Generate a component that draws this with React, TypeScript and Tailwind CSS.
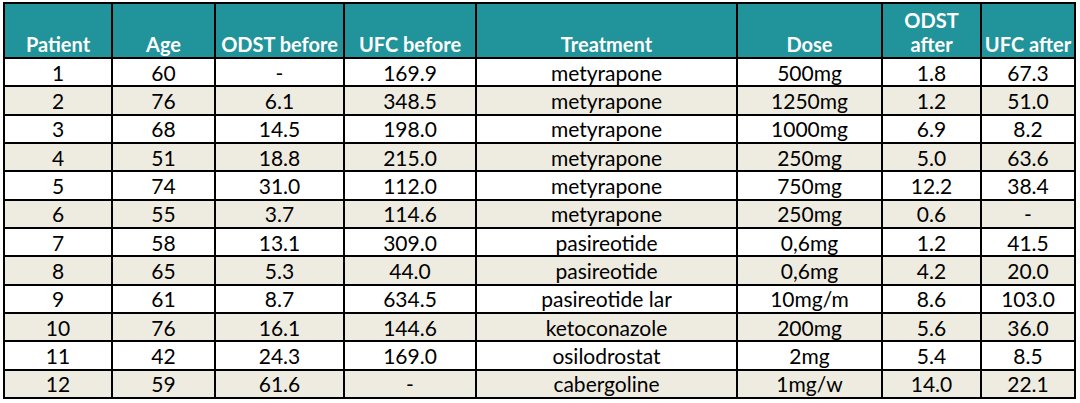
import React from "react";

const rows: string[][] = [
  ["1", "60", "-", "169.9", "metyrapone", "500mg", "1.8", "67.3"],
  ["2", "76", "6.1", "348.5", "metyrapone", "1250mg", "1.2", "51.0"],
  ["3", "68", "14.5", "198.0", "metyrapone", "1000mg", "6.9", "8.2"],
  ["4", "51", "18.8", "215.0", "metyrapone", "250mg", "5.0", "63.6"],
  ["5", "74", "31.0", "112.0", "metyrapone", "750mg", "12.2", "38.4"],
  ["6", "55", "3.7", "114.6", "metyrapone", "250mg", "0.6", "-"],
  ["7", "58", "13.1", "309.0", "pasireotide", "0,6mg", "1.2", "41.5"],
  ["8", "65", "5.3", "44.0", "pasireotide", "0,6mg", "4.2", "20.0"],
  ["9", "61", "8.7", "634.5", "pasireotide lar", "10mg/m", "8.6", "103.0"],
  ["10", "76", "16.1", "144.6", "ketoconazole", "200mg", "5.6", "36.0"],
  ["11", "42", "24.3", "169.0", "osilodrostat", "2mg", "5.4", "8.5"],
  ["12", "59", "61.6", "-", "cabergoline", "1mg/w", "14.0", "22.1"],
];

const headers = ["Patient", "Age", "ODST before", "UFC before", "Treatment", "Dose", "ODST after", "UFC after"];
const widths = [108, 103, 129, 132, 261, 145, 99, 94];

export default function App() {
  return (
    <div className="w-[1080px] h-[403px] bg-white pt-[2px] pl-[3px]" style={{ fontFamily: "Lato, 'Liberation Sans', sans-serif" }}>
      <table className="border-collapse border-2 border-black table-fixed">
        <colgroup>
          {widths.map((w, i) => (
            <col key={i} style={{ width: w }} />
          ))}
        </colgroup>
        <thead>
          <tr className="h-[55px] bg-[#21939a]">
            {headers.map((h, i) => (
              <th
                key={i}
                className="border-2 border-black align-bottom text-white font-bold text-[20px] leading-[24px] pb-[1px] px-0 whitespace-nowrap"
              >
                {h === "ODST after" ? (
                  <>
                    ODST
                    <br />
                    after
                  </>
                ) : (
                  h
                )}
              </th>
            ))}
          </tr>
        </thead>
        <tbody>
          {rows.map((r, ri) => (
            <tr key={ri} className={`h-[28.33px] ${ri % 2 === 1 ? "bg-[#eeece1]" : "bg-white"}`}>
              {r.map((c, ci) => (
                <td key={ci} className="border-2 border-black text-center text-[21px] leading-[24px] text-black p-0 pt-[1px] align-middle">
                  {c}
                </td>
              ))}
            </tr>
          ))}
        </tbody>
      </table>
    </div>
  );
}
